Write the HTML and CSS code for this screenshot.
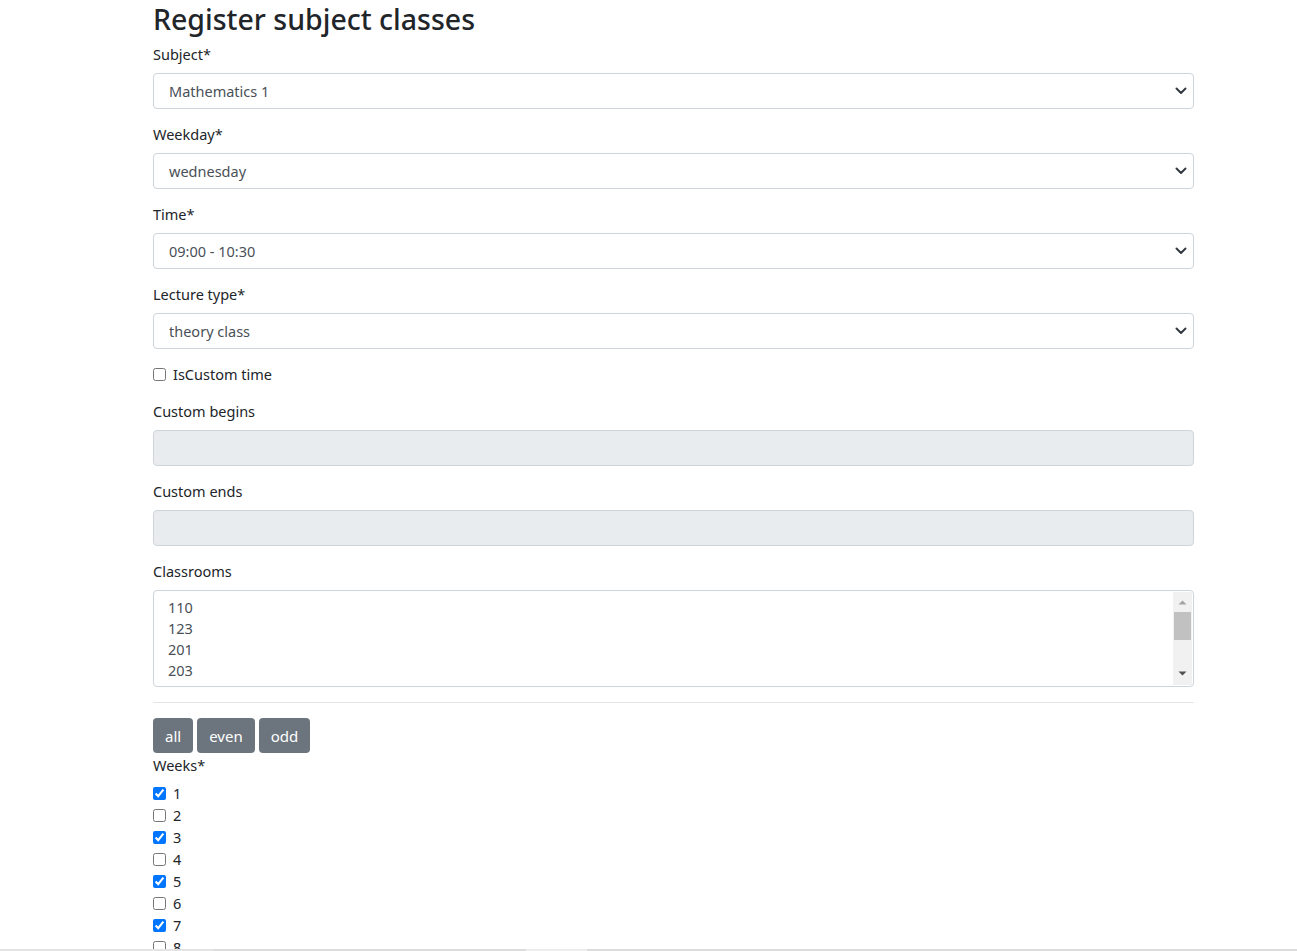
FILE: index.html
```html
<!DOCTYPE html>
<html lang="en">
<head>
<meta charset="utf-8">
<title>Register subject classes</title>
<link rel="stylesheet" href="styles.css">
</head>
<body>
<main class="page">
  <h2 class="title">Register subject classes</h2>

  <div class="group">
    <label class="label" for="subject">Subject*</label>
    <div class="select-wrap">
      <select class="control" id="subject"><option>Mathematics 1</option></select>
      <svg class="chev" width="12" height="8" viewBox="0 0 12 8"><path d="M1.5 1.5 6 6l4.5-4.5" fill="none" stroke="#343a40" stroke-width="2" stroke-linecap="round" stroke-linejoin="round"/></svg>
    </div>
  </div>

  <div class="group">
    <label class="label" for="weekday">Weekday*</label>
    <div class="select-wrap">
      <select class="control" id="weekday"><option>wednesday</option></select>
      <svg class="chev" width="12" height="8" viewBox="0 0 12 8"><path d="M1.5 1.5 6 6l4.5-4.5" fill="none" stroke="#343a40" stroke-width="2" stroke-linecap="round" stroke-linejoin="round"/></svg>
    </div>
  </div>

  <div class="group">
    <label class="label" for="time">Time*</label>
    <div class="select-wrap">
      <select class="control" id="time"><option>09:00 - 10:30</option></select>
      <svg class="chev" width="12" height="8" viewBox="0 0 12 8"><path d="M1.5 1.5 6 6l4.5-4.5" fill="none" stroke="#343a40" stroke-width="2" stroke-linecap="round" stroke-linejoin="round"/></svg>
    </div>
  </div>

  <div class="group">
    <label class="label" for="ltype">Lecture type*</label>
    <div class="select-wrap">
      <select class="control" id="ltype"><option>theory class</option></select>
      <svg class="chev" width="12" height="8" viewBox="0 0 12 8"><path d="M1.5 1.5 6 6l4.5-4.5" fill="none" stroke="#343a40" stroke-width="2" stroke-linecap="round" stroke-linejoin="round"/></svg>
    </div>
  </div>

  <div class="check-row custom-check">
    <input type="checkbox" class="check" id="iscustom">
    <label for="iscustom">IsCustom time</label>
  </div>

  <div class="group">
    <label class="label" for="cbegins">Custom begins</label>
    <input class="control disabled" id="cbegins" type="text" disabled>
  </div>

  <div class="group">
    <label class="label" for="cends">Custom ends</label>
    <input class="control disabled" id="cends" type="text" disabled>
  </div>

  <div class="group">
    <span class="label">Classrooms</span>
    <div class="listbox">
      <div class="options">
        <div class="option">110</div>
        <div class="option">123</div>
        <div class="option">201</div>
        <div class="option">203</div>
      </div>
      <div class="scrollbar">
        <svg class="sb-arrow" width="17" height="17" viewBox="0 0 17 17"><path d="M4.5 12.5h8l-4-4z" fill="#a3a3a3"/></svg>
        <div class="sb-thumb"></div>
        <div class="sb-track"></div>
        <svg class="sb-arrow" width="17" height="17" viewBox="0 0 17 17"><path d="M4.5 3.5h8l-4 4z" fill="#505050"/></svg>
      </div>
    </div>
  </div>

  <hr class="divider">

  <div class="btn-row">
    <button class="btn" type="button">all</button>
    <button class="btn" type="button">even</button>
    <button class="btn" type="button">odd</button>
  </div>

  <div class="weeks-label">Weeks*</div>
  <div class="weeks">
    <div class="check-row"><input type="checkbox" class="check" id="w1" checked><label for="w1">1</label></div>
    <div class="check-row"><input type="checkbox" class="check" id="w2"><label for="w2">2</label></div>
    <div class="check-row"><input type="checkbox" class="check" id="w3" checked><label for="w3">3</label></div>
    <div class="check-row"><input type="checkbox" class="check" id="w4"><label for="w4">4</label></div>
    <div class="check-row"><input type="checkbox" class="check" id="w5" checked><label for="w5">5</label></div>
    <div class="check-row"><input type="checkbox" class="check" id="w6"><label for="w6">6</label></div>
    <div class="check-row"><input type="checkbox" class="check" id="w7" checked><label for="w7">7</label></div>
    <div class="check-row"><input type="checkbox" class="check" id="w8"><label for="w8">8</label></div>
    <div class="check-row"><input type="checkbox" class="check" id="w9" checked><label for="w9">9</label></div>
    <div class="check-row"><input type="checkbox" class="check" id="w10"><label for="w10">10</label></div>
  </div>
</main>

<div class="hscroll">
  <div class="hs-a"></div>
  <div class="hs-b"></div>
  <div class="hs-c"></div>
  <div class="hs-d"></div>
</div>
</body>
</html>
```

FILE: styles.css
```css
html {
  scrollbar-width: none;
}

body {
  margin: 0;
  font-family: "Noto Sans", "Open Sans", sans-serif;
  font-size: 14.5px;
  color: #212529;
  background: #fff;
}

.page {
  width: 1041px;
  margin-left: 153px;
}

.title {
  font-size: 28.5px;
  font-weight: 500;
  line-height: 38px;
  margin: 0 0 4px;
}

.group {
  margin-bottom: 13px;
}

.label {
  display: block;
  line-height: 24px;
  margin-bottom: 7px;
}

.select-wrap {
  position: relative;
}

.control {
  display: block;
  width: 100%;
  height: 36px;
  box-sizing: border-box;
  margin: 0;
  padding: 0 36px 0 15px;
  border: 1px solid #ced4da;
  border-radius: 4px;
  background: #fff;
  font: inherit;
  color: #495057;
  appearance: none;
  -webkit-appearance: none;
}

.control.disabled {
  background: #e9ecef;
}

.chev {
  position: absolute;
  right: 7px;
  top: 14px;
  pointer-events: none;
}

.check-row {
  display: flex;
  align-items: center;
  height: 22px;
}

.custom-check {
  height: 24px;
  margin-bottom: 13px;
}

.check {
  width: 13px;
  height: 13px;
  margin: 0 7px 0 0;
}

.listbox {
  display: flex;
  height: 97px;
  box-sizing: border-box;
  border: 1px solid #ced4da;
  border-radius: 4px;
  overflow: hidden;
}

.options {
  flex: 1;
  padding: 6px 14px;
  color: #495057;
}

.option {
  line-height: 21px;
}

.scrollbar {
  width: 19px;
  margin: 1px 1px 1px 0;
  background: #f1f1f1;
  display: flex;
  flex-direction: column;
  align-items: center;
}

.sb-arrow {
  flex: none;
}

.sb-thumb {
  width: 17px;
  height: 28px;
  background: #c1c1c1;
  margin-top: 3px;
}

.sb-track {
  flex: 1;
}

.divider {
  margin: 15px 0 15px;
  border: 0;
  border-top: 1px solid rgba(0, 0, 0, 0.1);
}

.btn-row {
  display: flex;
  gap: 4px;
}

.btn {
  height: 35px;
  padding: 0 12px;
  border: 0;
  border-radius: 4px;
  background: #6c757d;
  color: #fff;
  font: inherit;
  font-size: 15px;
}

.weeks-label {
  line-height: 24px;
  margin-bottom: 5px;
}

.hscroll {
  position: fixed;
  left: 0;
  right: 0;
  bottom: 0;
  height: 2px;
  display: flex;
}

.hs-a {
  width: 213px;
  background: #e4e4e4;
}

.hs-b {
  width: 313px;
  background: #dcdcdc;
}

.hs-c {
  width: 61px;
  background: #ededed;
}

.hs-d {
  flex: 1;
  background: #dcdcdc;
}
```
